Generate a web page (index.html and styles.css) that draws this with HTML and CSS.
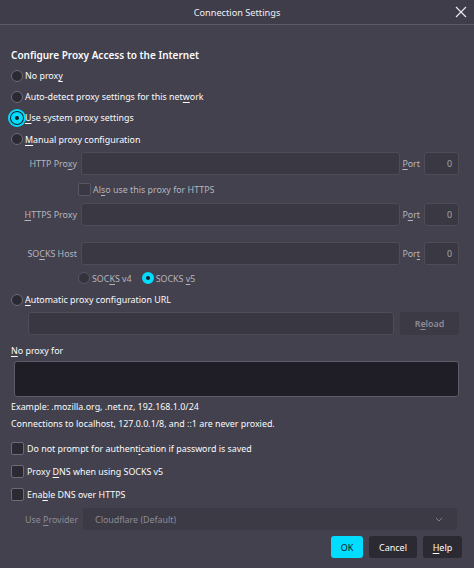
FILE: index.html
```html
<!DOCTYPE html>
<html lang="en">
<head>
    <meta charset="UTF-8">
    <title>Connection Settings</title>
    <link rel="stylesheet" href="styles.css">
</head>
<body>
    <div class="titlebar">
        <span class="titlebar-text">Connection Settings</span>
        <span class="close">
            <svg width="12" height="12" viewBox="0 0 12 12"><path d="M1 1L11 11M11 1L1 11" stroke="#e8e8ee" stroke-width="1.2" fill="none"/></svg>
        </span>
    </div>
    <div class="content">
        <div class="heading">Configure Proxy Access to the Internet</div>

        <label class="choice"><span class="radio"></span><span>No prox<u>y</u></span></label>
        <label class="choice"><span class="radio"></span><span>Auto-detect proxy settings for this net<u>w</u>ork</span></label>
        <label class="choice"><span class="radio checked focused"></span><span><u>U</u>se system proxy settings</span></label>
        <label class="choice manual"><span class="radio"></span><span><u>M</u>anual proxy configuration</span></label>

        <div class="proxy-row first">
            <span class="proxy-label">HTTP Pro<u>x</u>y</span>
            <span class="field"></span>
            <span class="port-label"><u>P</u>ort</span>
            <span class="port">0</span>
        </div>
        <label class="sub-check"><span class="checkbox"></span><span>Al<u>s</u>o use this proxy for HTTPS</span></label>
        <div class="proxy-row">
            <span class="proxy-label"><u>H</u>TTPS Proxy</span>
            <span class="field"></span>
            <span class="port-label">P<u>o</u>rt</span>
            <span class="port">0</span>
        </div>
        <div class="proxy-row socks">
            <span class="proxy-label">SO<u>C</u>KS Host</span>
            <span class="field"></span>
            <span class="port-label">Por<u>t</u></span>
            <span class="port">0</span>
        </div>
        <div class="socks-versions">
            <label class="mini-choice"><span class="radio dim"></span><span>SOC<u>K</u>S v4</span></label>
            <label class="mini-choice"><span class="radio checked"></span><span>SOCKS <u>v</u>5</span></label>
        </div>

        <label class="choice auto"><span class="radio"></span><span><u>A</u>utomatic proxy configuration URL</span></label>
        <div class="url-row">
            <span class="field"></span>
            <span class="reload-btn"><span>R<u>e</u>load</span></span>
        </div>

        <div class="noproxy-label"><u>N</u>o proxy for</div>
        <div class="textarea"></div>
        <div class="hint">Example: .mozilla.org, .net.nz, 192.168.1.0/24</div>
        <div class="hint second">Connections to localhost, 127.0.0.1/8, and ::1 are never proxied.</div>

        <label class="check first"><span class="checkbox"></span><span>Do not prompt for authent<u>i</u>cation if password is saved</span></label>
        <label class="check"><span class="checkbox"></span><span>Proxy <u>D</u>NS when using SOCKS v5</span></label>
        <label class="check"><span class="checkbox"></span><span>Ena<u>b</u>le DNS over HTTPS</span></label>

        <div class="provider-row">
            <span class="provider-label">Use <u>P</u>rovider</span>
            <span class="select">
                <span>Cloudflare (Default)</span>
                <svg width="8" height="5" viewBox="0 0 8 5"><path d="M1 1L4 4L7 1" stroke="#7d7c88" stroke-width="1" fill="none"/></svg>
            </span>
        </div>

        <div class="buttons">
            <span class="btn primary">OK</span>
            <span class="btn cancel">Cancel</span>
            <span class="btn help"><span><u>H</u>elp</span></span>
        </div>
    </div>
</body>
</html>
```

FILE: styles.css
```css
body {
    margin: 0;
    background: #42414d;
    color: #fbfbfe;
    font-family: "Noto Sans", "Open Sans", sans-serif;
    font-size: 8.9px;
    height: 568px;
    overflow: hidden;
}
u {
    text-decoration-thickness: 1px;
    text-underline-offset: 2px;
}
.titlebar {
    height: 24px;
    border-bottom: 1px solid #5a5965;
    background: #3e3d49;
    display: flex;
    align-items: center;
    justify-content: center;
    position: relative;
}
.titlebar-text {
    font-size: 9.2px;
    color: #f0f0f4;
}
.close {
    position: absolute;
    right: 7px;
    top: 6px;
    display: flex;
}
.content {
    padding: 0 15px 0 11px;
}
.heading {
    margin-top: 21px;
    height: 19px;
    line-height: 19px;
    font-size: 10px;
    font-weight: 600;
}
.choice {
    display: flex;
    align-items: center;
    height: 21px;
    gap: 2px;
}
.choice.manual {
    height: 22px;
}
.radio {
    width: 10px;
    height: 10px;
    border-radius: 50%;
    background: #2b2a33;
    border: 1px solid #6c6b77;
    flex: none;
    box-sizing: content-box;
}
.radio.dim {
    background: #34333d;
    border-color: #575662;
}
.radio.checked {
    width: 4px;
    height: 4px;
    background: #1c1b22;
    border: 4px solid #00ddff;
}
.radio.focused {
    box-shadow: 0 0 0 1px #1c1b22, 0 0 0 3px #00ddff;
}
.checkbox {
    width: 11px;
    height: 11px;
    border-radius: 2px;
    background: #2b2a33;
    border: 1px solid #6c6b77;
    flex: none;
}
.proxy-row {
    display: flex;
    align-items: center;
    height: 23px;
    margin-top: 2px;
    color: #b6b5bf;
}
.proxy-row + .proxy-row {
    margin-top: 1px;
}
.proxy-row.socks {
    margin-top: 16px;
}
.proxy-label {
    width: 66px;
    text-align: right;
    margin-right: 4px;
    flex: none;
}
.field {
    flex: 1;
    height: 21px;
    background: #3a3943;
    border: 1px solid #4d4c57;
    border-radius: 3px;
}
.port-label {
    margin: 0 4px 0 2px;
}
.port {
    width: 27px;
    height: 21px;
    padding-right: 6px;
    background: #3a3943;
    border: 1px solid #4d4c57;
    border-radius: 3px;
    display: flex;
    align-items: center;
    justify-content: flex-end;
    color: #a7a6b0;
}
.sub-check {
    display: flex;
    align-items: center;
    gap: 2px;
    height: 24px;
    margin-top: 2px;
    padding-left: 67px;
    color: #b6b5bf;
}
.sub-check .checkbox {
    background: #3a3943;
    border-color: #575662;
}
.socks-versions {
    display: flex;
    align-items: center;
    height: 22px;
    margin-top: 2px;
    padding-left: 67px;
    gap: 10px;
    color: #b6b5bf;
}
.mini-choice {
    display: flex;
    align-items: center;
    gap: 2px;
}
.url-row {
    display: flex;
    height: 23px;
    margin-top: 2px;
    padding-left: 17px;
    gap: 6px;
}
.url-row .field {
    background: #393842;
}
.reload-btn {
    width: 59px;
    height: 23px;
    background: #3b3a45;
    border-radius: 3px;
    display: flex;
    align-items: center;
    justify-content: center;
    color: #8d8c97;
    font-weight: 600;
}
.noproxy-label {
    margin-top: 6px;
    height: 20px;
    line-height: 20px;
}
.textarea {
    margin-left: 3px;
    height: 34px;
    background: #1f1e26;
    border: 1px solid #5d5c68;
    border-radius: 3px;
}
.hint {
    height: 18px;
    line-height: 18px;
    margin-top: 1px;
}
.hint.second {
    height: 17px;
    line-height: 16px;
    margin-top: 0;
}
.check {
    display: flex;
    align-items: center;
    gap: 3px;
    height: 23px;
}
.check.first {
    margin-top: 4px;
}
.provider-row {
    display: flex;
    align-items: center;
    height: 22px;
    margin-top: 2px;
    padding-left: 14px;
    margin-right: 2px;
    color: #8d8c97;
}
.provider-label {
    margin-right: 5px;
}
.select {
    flex: 1;
    height: 22px;
    background: #3b3a45;
    border-radius: 3px;
    display: flex;
    align-items: center;
    justify-content: space-between;
    padding: 0 14px 0 12px;
    color: #8d8c97;
}
.buttons {
    display: flex;
    justify-content: flex-end;
    gap: 6px;
    margin-top: 6px;
    margin-right: -3px;
}
.btn {
    height: 22px;
    background: #2b2a33;
    border-radius: 3px;
    display: flex;
    align-items: center;
    justify-content: center;
    font-size: 9px;
}
.btn.primary {
    background: #00ddff;
    color: #15141a;
    width: 32px;
}
.btn.cancel {
    width: 48px;
}
.btn.help {
    width: 39px;
}
```
